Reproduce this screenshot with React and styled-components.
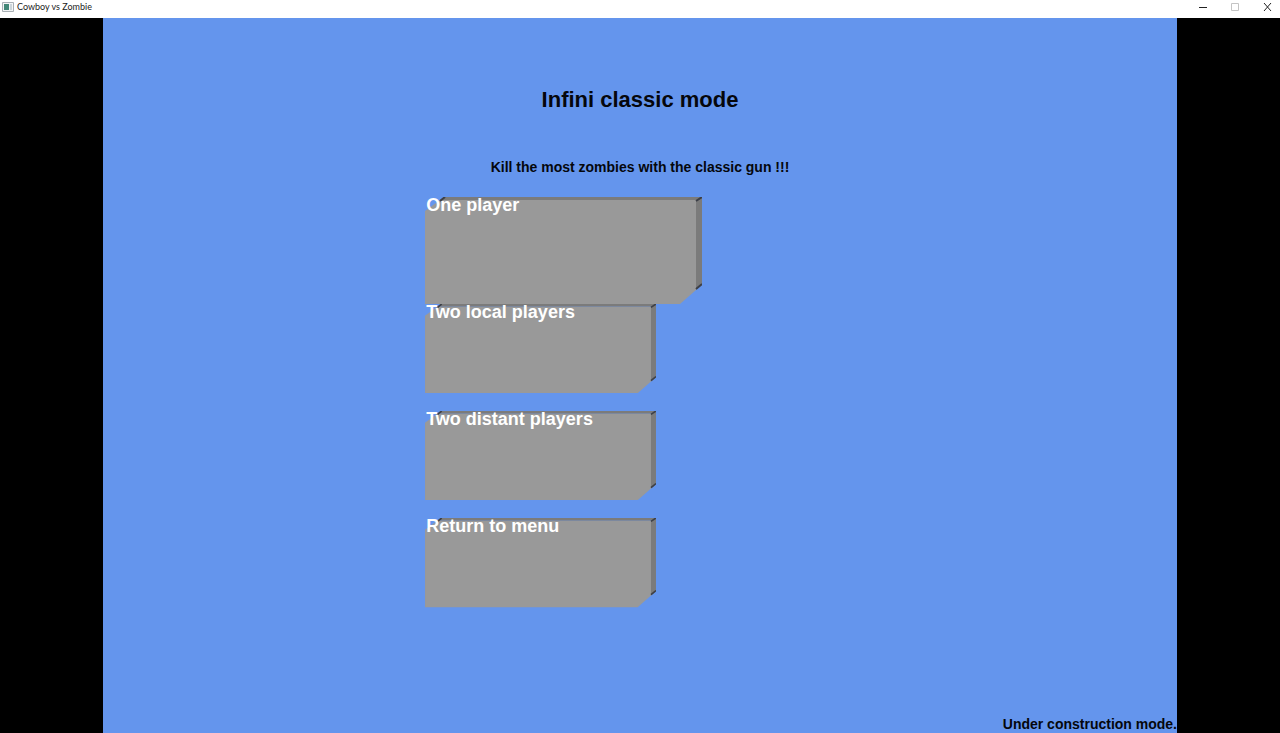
import React from "react";
import styled, { createGlobalStyle } from "styled-components";

const GlobalStyle = createGlobalStyle`
  * { box-sizing: border-box; }
  body { margin: 0; background: #000; }
`;

const Window = styled.div`
  display: flex;
  flex-direction: column;
  min-height: 100vh;
  font-family: "Liberation Sans", Arial, sans-serif;
`;

const TitleBar = styled.header`
  display: flex;
  align-items: center;
  height: 18px;
  padding: 0 7px 4px 2px;
  background: #fff;
  color: #222;
`;

const AppIcon = styled.svg`
  width: 12px;
  height: 10px;
  margin-right: 3px;
`;

const WindowTitle = styled.span`
  flex: 1;
  font: 9px/14px Lato, "Open Sans", sans-serif;
`;

const WindowControls = styled.div`
  display: flex;
  gap: 20px;
`;

const ControlButton = styled.button`
  display: flex;
  padding: 0;
  border: 0;
  background: none;
  color: ${(p) => (p.disabled ? "#c4c4c4" : "#222")};

  svg {
    width: 12px;
    height: 12px;
    fill: none;
    stroke: currentColor;
  }
`;

const Stage = styled.main`
  display: flex;
  flex-direction: column;
  flex: 1;
  align-self: center;
  width: 100%;
  max-width: calc((100vh - 17px) * 3 / 2);
  background: #6495ed;
  color: #05070c;
`;

const Heading = styled.h1`
  margin: 68px 0 0;
  font-size: 22px;
  line-height: 28px;
  text-align: center;
`;

const Description = styled.p`
  margin: 44px 0 0;
  font-size: 14px;
  font-weight: bold;
  line-height: 18px;
  text-align: center;
`;

const Menu = styled.nav`
  display: flex;
  flex-direction: column;
  align-items: flex-start;
  margin: 21px 0 0 30%;
`;

const MenuButton = styled.button`
  display: grid;
  width: ${(p) => (p.$large ? "277px" : "231px")};
  margin: 0 0 ${(p) => (p.$large ? "0" : "18px")};
  padding: 0;
  border: 0;
  background: none;
  color: #fff;
  text-align: left;
  cursor: pointer;
`;

const Slab = styled.svg`
  grid-area: 1 / 1;
  display: block;
  width: 100%;
`;

const Label = styled.span`
  grid-area: 1 / 1;
  z-index: 1;
  padding-left: 1px;
  font: bold 18px/16px "Liberation Sans", Arial, sans-serif;
  white-space: nowrap;
`;

const Status = styled.p`
  margin: auto 0 0;
  font-size: 14px;
  font-weight: bold;
  line-height: 18px;
  text-align: right;
`;

function MenuItem({ children, large }) {
  return (
    <MenuButton type="button" $large={large}>
      <Slab viewBox="0 0 277 107" aria-hidden="true">
        <path d="M0 14L15 3H271V93L255 107H0Z" fill="#999" />
        <path d="M19 0H277V88L271 93V3H15Z" fill="#7b7b7b" />
        <path d="M15 4L20 0M271 4L277 0M271 92L277 87" stroke="#3d4048" strokeWidth="2" />
      </Slab>
      <Label>{children}</Label>
    </MenuButton>
  );
}

export default function App() {
  return (
    <>
      <GlobalStyle />
      <Window>
        <TitleBar>
          <AppIcon viewBox="0 0 12 10" aria-hidden="true">
            <path d="M.5 .5H11.5V9.5H.5Z" fill="#f3f5f6" stroke="#a9b0b5" />
            <path d="M2 2H7V8H2Z" fill="#438878" />
            <path d="M8 2H10V8H8Z" fill="#ccd5da" />
          </AppIcon>
          <WindowTitle>Cowboy vs Zombie</WindowTitle>
          <WindowControls>
            <ControlButton type="button" aria-label="Minimize">
              <svg viewBox="0 0 12 12"><path d="M2 6.5H10" /></svg>
            </ControlButton>
            <ControlButton type="button" aria-label="Maximize" disabled>
              <svg viewBox="0 0 12 12"><path d="M2.5 2.5H9.5V9.5H2.5Z" /></svg>
            </ControlButton>
            <ControlButton type="button" aria-label="Close">
              <svg viewBox="0 0 12 12"><path d="M3 2L10 10M10 2L3 10" /></svg>
            </ControlButton>
          </WindowControls>
        </TitleBar>
        <Stage>
          <Heading>Infini classic mode</Heading>
          <Description>Kill the most zombies with the classic gun !!!</Description>
          <Menu>
            <MenuItem large>One player</MenuItem>
            <MenuItem>Two local players</MenuItem>
            <MenuItem>Two distant players</MenuItem>
            <MenuItem>Return to menu</MenuItem>
          </Menu>
          <Status>Under construction mode.</Status>
        </Stage>
      </Window>
    </>
  );
}
